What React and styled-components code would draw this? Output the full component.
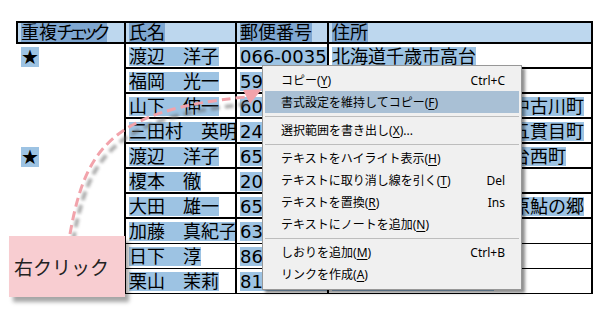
import React from 'react';
import styled, { createGlobalStyle } from 'styled-components';

const GlobalStyle = createGlobalStyle`
  html, body {
    margin: 0;
    padding: 0;
    background: #fff;
  }
`;

const rows = [
  { star: true, name: '渡辺　洋子', zip: '066-0035', addr: '北海道千歳市高台' },
  { name: '福岡　光一', zip: '590-0025', addr: '大阪府堺市堺区' },
  { name: '山下　伸一', zip: '602-8301', addr: '京都府京都市上京区上中古川町' },
  { name: '三田村　英明', zip: '246-0013', addr: '神奈川県横浜市瀬谷区五貫目町' },
  { star: true, name: '渡辺　洋子', zip: '651-1101', addr: '兵庫県神戸市北区鈴蘭台西町' },
  { name: '榎本　徹', zip: '204-0021', addr: '東京都清瀬市元町' },
  { name: '大田　雄一', zip: '652-0043', addr: '兵庫県朝来市和田山町原鮎の郷' },
  { name: '加藤　真紀子', zip: '630-8213', addr: '奈良県奈良市登大路町', thin: true },
  { name: '日下　淳', zip: '860-0806', addr: '熊本県熊本市中央区', thin: true },
  { name: '栗山　茉莉', zip: '812-0011', addr: '福岡県福岡市博多区', thin: true },
];

const menuItems = [
  { label: 'コピー', key: 'Y', shortcut: 'Ctrl+C' },
  { label: '書式設定を維持してコピー', key: 'F', active: true },
  'sep',
  { label: '選択範囲を書き出し', key: 'X', tail: '...' },
  'sep',
  { label: 'テキストをハイライト表示', key: 'H' },
  { label: 'テキストに取り消し線を引く', key: 'T', shortcut: 'Del' },
  { label: 'テキストを置換', key: 'R', shortcut: 'Ins' },
  { label: 'テキストにノートを追加', key: 'N' },
  'sep',
  { label: 'しおりを追加', key: 'M', shortcut: 'Ctrl+B' },
  { label: 'リンクを作成', key: 'A' },
];

const App = () => (
  <>
    <GlobalStyle />
    <Stage>
      <Sheet>
        <Cell $head $first>
          <Mark $head>
            重複<Kana>チェック</Kana>
          </Mark>
        </Cell>
        <Cell $head>
          <Mark $head>氏名</Mark>
        </Cell>
        <Cell $head>
          <Mark $head>郵便番号</Mark>
        </Cell>
        <Cell $head>
          <Mark $head>住所</Mark>
        </Cell>
        {rows.map((r, i) => (
          <React.Fragment key={i}>
            <Cell $blank>{r.star && <Star>★</Star>}</Cell>
            <Cell $thin={r.thin}>
              <Mark>{r.name}</Mark>
            </Cell>
            <Cell $thin={r.thin}>
              <Mark>{r.zip}</Mark>
            </Cell>
            <Cell $thin={r.thin}>
              <Mark>{r.addr}</Mark>
            </Cell>
          </React.Fragment>
        ))}
      </Sheet>

      <Arrow width="613" height="312" viewBox="0 0 613 312">
        <defs>
          <filter id="soft" x="-20%" y="-20%" width="140%" height="140%">
            <feGaussianBlur stdDeviation="1.8" />
          </filter>
        </defs>
        <g transform="translate(3 7)" filter="url(#soft)" opacity="0.55">
          <path
            d="M 70 234 C 85 150, 110 110, 246 97"
            fill="none"
            stroke="#666"
            strokeWidth="4"
            strokeDasharray="9 5"
          />
        </g>
        <path
          d="M 70 234 C 85 150, 110 110, 246 97"
          fill="none"
          stroke="#f2a3ab"
          strokeWidth="3"
          strokeDasharray="9 5"
        />
        <polygon points="262,89 250,104 243,90" fill="#f2a3ab" />
      </Arrow>

      <Menu>
        {menuItems.map((m, i) =>
          m === 'sep' ? (
            <Separator key={i} />
          ) : (
            <Item key={i} $active={m.active}>
              <span>
                {m.label}(<u>{m.key}</u>){m.tail}
              </span>
              {m.shortcut && <span>{m.shortcut}</span>}
            </Item>
          )
        )}
      </Menu>

      <Callout>右クリック</Callout>
    </Stage>
  </>
);

export default App;

const Stage = styled.div`
  position: relative;
  width: 613px;
  height: 312px;
  box-sizing: border-box;
  padding: 21px 0 0 16px;
  overflow: hidden;
  background: #fff;
`;

const Sheet = styled.div`
  display: grid;
  grid-template-columns: 110px 111px 92px 264px;
  grid-template-rows: 23px repeat(10, 25px);
  font-family: 'DejaVu Sans', 'Noto Sans CJK JP', sans-serif;
  font-size: 18px;
  color: #000;
`;

const Cell = styled.div`
  box-sizing: border-box;
  display: flex;
  align-items: center;
  padding: ${({ $head }) => ($head ? '0' : '1px')} 0 0 3px;
  overflow: hidden;
  white-space: nowrap;
  background: ${({ $head }) => ($head ? '#bdd7ee' : '#fff')};
  border-right: 2px solid #000;
  border-top: ${({ $head }) => ($head ? '2px solid #000' : 'none')};
  border-left: ${({ $first, $blank }) =>
    $first ? '2px solid #000' : $blank ? '2px solid transparent' : 'none'};
  border-bottom: ${({ $blank, $thin }) =>
    $blank ? 'none' : `${$thin ? 1 : 2}px solid #000`};
`;

const Mark = styled.span`
  display: inline-block;
  height: 19px;
  line-height: 19px;
  background: ${({ $head }) => ($head ? '#7fa7d1' : '#9dc3e3')};
`;

const Kana = styled.span`
  font-feature-settings: 'palt';
  letter-spacing: -3px;
`;

const Star = styled.span`
  display: inline-block;
  width: 18px;
  height: 20px;
  line-height: 20px;
  text-align: center;
  font-size: 20px;
  background: #9dc3e3;
`;

const Arrow = styled.svg`
  position: absolute;
  left: 0;
  top: 0;
  pointer-events: none;
`;

const Menu = styled.div`
  position: absolute;
  left: 262px;
  top: 65px;
  width: 260px;
  box-sizing: border-box;
  padding: 3px 2px 4px;
  background: #f0f0f0;
  border: 1px solid #979797;
  box-shadow: 3px 3px 3px rgba(0, 0, 0, 0.45);
  font-family: 'Noto Sans', 'Noto Sans CJK JP', sans-serif;
  font-size: 12px;
  color: #000;
`;

const Item = styled.div`
  height: 22px;
  display: flex;
  align-items: center;
  justify-content: space-between;
  padding: 0 14px 0 16px;
  background: ${({ $active }) => ($active ? '#a9c0d5' : 'transparent')};
  white-space: nowrap;

  u {
    text-underline-offset: 2px;
  }
`;

const Separator = styled.div`
  height: 6px;
  display: flex;
  align-items: center;

  &::before {
    content: '';
    flex: 1;
    height: 1px;
    background: #bdbdbd;
  }
`;

const Callout = styled.div`
  position: absolute;
  left: 9px;
  top: 236px;
  width: 116px;
  height: 61px;
  box-sizing: border-box;
  display: flex;
  align-items: center;
  padding-left: 5px;
  background: #f8cdd1;
  box-shadow: 4px 5px 4px rgba(0, 0, 0, 0.35);
  font-family: 'Noto Sans CJK JP', sans-serif;
  font-size: 19px;
  color: #222;
`;
